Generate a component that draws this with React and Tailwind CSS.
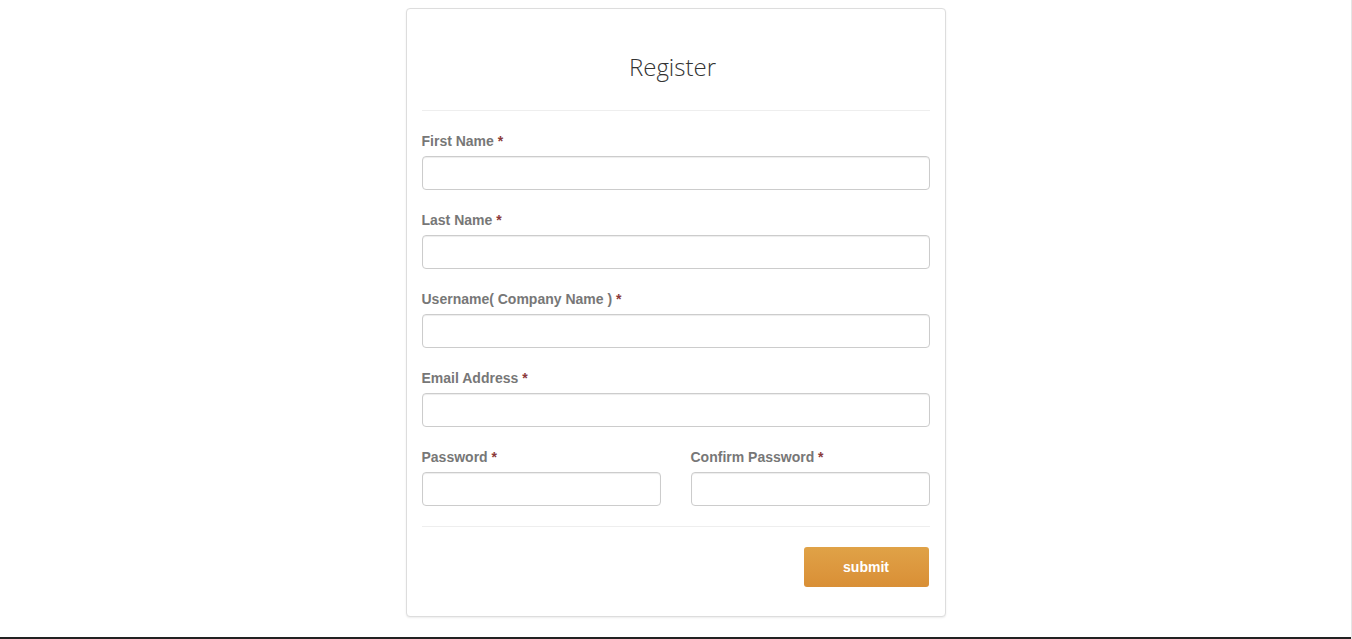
import React from 'react';

const Field = ({ label, className = '' }) => (
    <div className={`mb-[20px] ${className}`}>
        <label className="block mb-[5px] leading-[20px] text-[14px] font-bold text-[#777]">
            {label} <span className="text-[#8b3a3a]">*</span>
        </label>
        <input
            type="text"
            className="block w-full h-[34px] px-3 rounded-[4px] border border-[#ccc] bg-white shadow-[inset_0_1px_1px_rgba(0,0,0,0.075)] outline-none"
        />
    </div>
);

const App = () => {
    return (
        <div className="min-h-[639px] bg-white border-r border-[#e5e5e5]" style={{ fontFamily: '"Liberation Sans", Arial, sans-serif' }}>
            <div className="pt-[8px] pb-[20px]">
                <div className="mx-auto w-[540px] bg-white border border-[#ddd] rounded-[4px] shadow-[0_1px_2px_rgba(0,0,0,0.08)] px-[15px] pb-[29px]">
                    <div className="pt-[45px] pb-[30px] pr-[6px] text-center">
                        <h3 className="text-[24px] leading-[26px] font-light text-[#333]" style={{ fontFamily: '"Open Sans", sans-serif' }}>
                            Register
                        </h3>
                    </div>
                    <hr className="border-0 border-t border-[#eee] mb-[20px]" />
                    <form onSubmit={(e) => e.preventDefault()}>
                        <Field label="First Name" />
                        <Field label="Last Name" />
                        <Field label="Username( Company Name )" />
                        <Field label="Email Address" />
                        <div className="flex gap-[30px]">
                            <Field label="Password" className="flex-1" />
                            <Field label="Confirm Password" className="flex-1" />
                        </div>
                        <hr className="border-0 border-t border-[#eee] mb-[20px]" />
                        <div className="flex justify-end">
                            <button
                                type="submit"
                                className="w-[125px] h-[40px] mr-px rounded-[3px] bg-gradient-to-b from-[#e0a247] to-[#d98f36] text-white text-[14px] font-bold"
                            >
                                submit
                            </button>
                        </div>
                    </form>
                </div>
            </div>
            <div className="h-[40px] bg-[#222]" />
        </div>
    );
};

export default App;
